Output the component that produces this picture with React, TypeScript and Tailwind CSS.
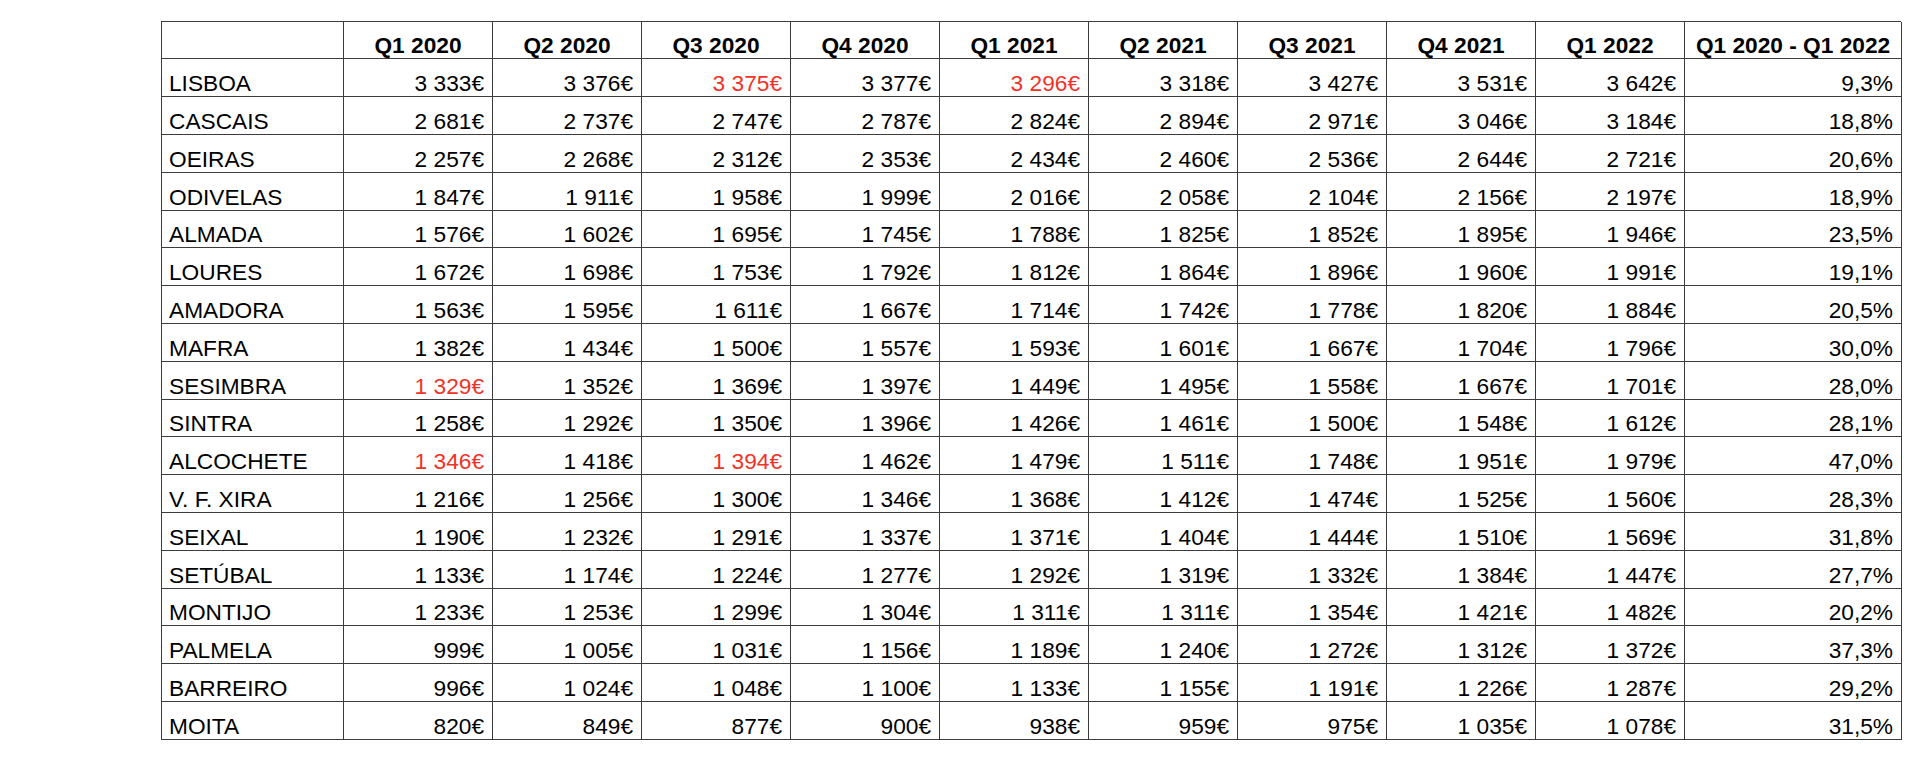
const quarters = [
  'Q1 2020',
  'Q2 2020',
  'Q3 2020',
  'Q4 2020',
  'Q1 2021',
  'Q2 2021',
  'Q3 2021',
  'Q4 2021',
  'Q1 2022',
];

const rows: { name: string; values: string[]; change: string; red?: number[] }[] = [
  { name: 'LISBOA', values: ['3 333', '3 376', '3 375', '3 377', '3 296', '3 318', '3 427', '3 531', '3 642'], change: '9,3%', red: [2, 4] },
  { name: 'CASCAIS', values: ['2 681', '2 737', '2 747', '2 787', '2 824', '2 894', '2 971', '3 046', '3 184'], change: '18,8%' },
  { name: 'OEIRAS', values: ['2 257', '2 268', '2 312', '2 353', '2 434', '2 460', '2 536', '2 644', '2 721'], change: '20,6%' },
  { name: 'ODIVELAS', values: ['1 847', '1 911', '1 958', '1 999', '2 016', '2 058', '2 104', '2 156', '2 197'], change: '18,9%' },
  { name: 'ALMADA', values: ['1 576', '1 602', '1 695', '1 745', '1 788', '1 825', '1 852', '1 895', '1 946'], change: '23,5%' },
  { name: 'LOURES', values: ['1 672', '1 698', '1 753', '1 792', '1 812', '1 864', '1 896', '1 960', '1 991'], change: '19,1%' },
  { name: 'AMADORA', values: ['1 563', '1 595', '1 611', '1 667', '1 714', '1 742', '1 778', '1 820', '1 884'], change: '20,5%' },
  { name: 'MAFRA', values: ['1 382', '1 434', '1 500', '1 557', '1 593', '1 601', '1 667', '1 704', '1 796'], change: '30,0%' },
  { name: 'SESIMBRA', values: ['1 329', '1 352', '1 369', '1 397', '1 449', '1 495', '1 558', '1 667', '1 701'], change: '28,0%', red: [0] },
  { name: 'SINTRA', values: ['1 258', '1 292', '1 350', '1 396', '1 426', '1 461', '1 500', '1 548', '1 612'], change: '28,1%' },
  { name: 'ALCOCHETE', values: ['1 346', '1 418', '1 394', '1 462', '1 479', '1 511', '1 748', '1 951', '1 979'], change: '47,0%', red: [0, 2] },
  { name: 'V. F. XIRA', values: ['1 216', '1 256', '1 300', '1 346', '1 368', '1 412', '1 474', '1 525', '1 560'], change: '28,3%' },
  { name: 'SEIXAL', values: ['1 190', '1 232', '1 291', '1 337', '1 371', '1 404', '1 444', '1 510', '1 569'], change: '31,8%' },
  { name: 'SETÚBAL', values: ['1 133', '1 174', '1 224', '1 277', '1 292', '1 319', '1 332', '1 384', '1 447'], change: '27,7%' },
  { name: 'MONTIJO', values: ['1 233', '1 253', '1 299', '1 304', '1 311', '1 311', '1 354', '1 421', '1 482'], change: '20,2%' },
  { name: 'PALMELA', values: ['999', '1 005', '1 031', '1 156', '1 189', '1 240', '1 272', '1 312', '1 372'], change: '37,3%' },
  { name: 'BARREIRO', values: ['996', '1 024', '1 048', '1 100', '1 133', '1 155', '1 191', '1 226', '1 287'], change: '29,2%' },
  { name: 'MOITA', values: ['820', '849', '877', '900', '938', '959', '975', '1 035', '1 078'], change: '31,5%' },
];

const cell = 'h-[37.8px] flex items-end border-r border-b border-[#3c3c3c] leading-[25px] whitespace-nowrap';

const App = () => {
  return (
    <div className="min-h-screen w-[1920px] h-[764px] bg-white pl-[161px] pt-[20.7px] text-black font-['Liberation_Sans',Arial,sans-serif] text-[22.7px]">
      <div className="w-[1740px] grid grid-cols-[182px_repeat(9,149px)_217px] border-l border-t border-[#3c3c3c]">
        {/* Header */}
        <div className={cell} />
        {quarters.map((q) => (
          <div key={q} className={`${cell} justify-center font-bold`}>
            {q}
          </div>
        ))}
        <div className={`${cell} justify-center font-bold`}>Q1 2020 - Q1 2022</div>

        {/* Rows */}
        {rows.map((row) => (
          <div key={row.name} className="contents">
            <div className={`${cell} pl-[7px]`}>{row.name}</div>
            {row.values.map((v, i) => (
              <div
                key={i}
                className={`${cell} justify-end pr-[8px] ${row.red?.includes(i) ? 'text-[#f03328]' : ''}`}
              >
                {v}€
              </div>
            ))}
            <div className={`${cell} justify-end pr-[8px]`}>{row.change}</div>
          </div>
        ))}
      </div>
    </div>
  );
};

export default App;
